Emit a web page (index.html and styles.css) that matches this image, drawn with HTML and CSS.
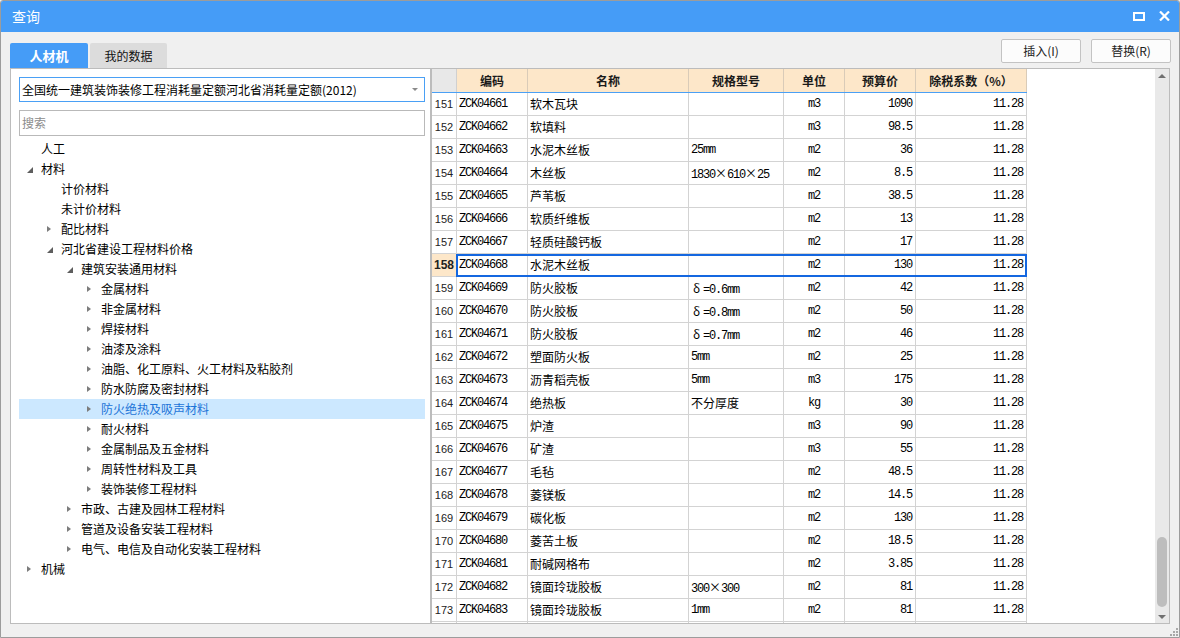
FILE: index.html
```html
<!DOCTYPE html>
<html lang="zh-CN">
<head>
<meta charset="utf-8">
<title>查询</title>
<link rel="stylesheet" href="styles.css">
</head>
<body>
<div class="window">
  <div class="titlebar">
    <span class="title">查询</span>
    <div class="win-btns">
      <svg class="ico-max" width="12" height="9" viewBox="0 0 12 9"><rect x="1" y="1" width="10" height="7" fill="none" stroke="#fff" stroke-width="2"/></svg>
      <svg class="ico-close" width="11" height="10" viewBox="0 0 11 10"><path d="M1 0.5 L10 9.5 M10 0.5 L1 9.5" stroke="#fff" stroke-width="2.2" fill="none"/></svg>
    </div>
  </div>
  <div class="toolbar">
    <div class="tabs">
      <div class="tab active">人材机</div>
      <div class="tab">我的数据</div>
    </div>
    <div class="actions">
      <div class="btn">插入(I)</div>
      <div class="btn">替换(R)</div>
    </div>
  </div>
  <div class="main">
    <div class="left">
      <div class="select"><span class="select-text">全国统一建筑装饰装修工程消耗量定额河北省消耗量定额(2012)</span><span class="caret"></span></div>
      <div class="search"><span class="placeholder">搜索</span></div>
      <div class="tree">
        <div class="node l0"><span class="tog"></span><span>人工</span></div>
        <div class="node l0"><span class="tog"><i class="arr-e"></i></span><span>材料</span></div>
        <div class="node l1"><span class="tog"></span><span>计价材料</span></div>
        <div class="node l1"><span class="tog"></span><span>未计价材料</span></div>
        <div class="node l1"><span class="tog"><i class="arr-c"></i></span><span>配比材料</span></div>
        <div class="node l1"><span class="tog"><i class="arr-e"></i></span><span>河北省建设工程材料价格</span></div>
        <div class="node l2"><span class="tog"><i class="arr-e"></i></span><span>建筑安装通用材料</span></div>
        <div class="node l3"><span class="tog"><i class="arr-c"></i></span><span>金属材料</span></div>
        <div class="node l3"><span class="tog"><i class="arr-c"></i></span><span>非金属材料</span></div>
        <div class="node l3"><span class="tog"><i class="arr-c"></i></span><span>焊接材料</span></div>
        <div class="node l3"><span class="tog"><i class="arr-c"></i></span><span>油漆及涂料</span></div>
        <div class="node l3"><span class="tog"><i class="arr-c"></i></span><span>油脂、化工原料、火工材料及粘胶剂</span></div>
        <div class="node l3"><span class="tog"><i class="arr-c"></i></span><span>防水防腐及密封材料</span></div>
        <div class="node l3 sel"><span class="tog"><i class="arr-c"></i></span><span>防火绝热及吸声材料</span></div>
        <div class="node l3"><span class="tog"><i class="arr-c"></i></span><span>耐火材料</span></div>
        <div class="node l3"><span class="tog"><i class="arr-c"></i></span><span>金属制品及五金材料</span></div>
        <div class="node l3"><span class="tog"><i class="arr-c"></i></span><span>周转性材料及工具</span></div>
        <div class="node l3"><span class="tog"><i class="arr-c"></i></span><span>装饰装修工程材料</span></div>
        <div class="node l2"><span class="tog"><i class="arr-c"></i></span><span>市政、古建及园林工程材料</span></div>
        <div class="node l2"><span class="tog"><i class="arr-c"></i></span><span>管道及设备安装工程材料</span></div>
        <div class="node l2"><span class="tog"><i class="arr-c"></i></span><span>电气、电信及自动化安装工程材料</span></div>
        <div class="node l0"><span class="tog"><i class="arr-c"></i></span><span>机械</span></div>
      </div>
    </div>
    <div class="right">
      <div class="grid-wrap">
        <div class="row head">
          <div class="c rn"></div><div class="c">编码</div><div class="c">名称</div><div class="c">规格型号</div><div class="c">单位</div><div class="c">预算价</div><div class="c">除税系数（%）</div>
        </div>
        <div class="row"><div class="c rn">151</div><div class="c code">ZCK04661</div><div class="c name">软木瓦块</div><div class="c spec"></div><div class="c unit">m3</div><div class="c num">1090</div><div class="c num">11.28</div></div>
        <div class="row"><div class="c rn">152</div><div class="c code">ZCK04662</div><div class="c name">软填料</div><div class="c spec"></div><div class="c unit">m3</div><div class="c num">98.5</div><div class="c num">11.28</div></div>
        <div class="row"><div class="c rn">153</div><div class="c code">ZCK04663</div><div class="c name">水泥木丝板</div><div class="c spec">25mm</div><div class="c unit">m2</div><div class="c num">36</div><div class="c num">11.28</div></div>
        <div class="row"><div class="c rn">154</div><div class="c code">ZCK04664</div><div class="c name">木丝板</div><div class="c spec">1830<span class="fw">×</span>610<span class="fw">×</span>25</div><div class="c unit">m2</div><div class="c num">8.5</div><div class="c num">11.28</div></div>
        <div class="row"><div class="c rn">155</div><div class="c code">ZCK04665</div><div class="c name">芦苇板</div><div class="c spec"></div><div class="c unit">m2</div><div class="c num">38.5</div><div class="c num">11.28</div></div>
        <div class="row"><div class="c rn">156</div><div class="c code">ZCK04666</div><div class="c name">软质纤维板</div><div class="c spec"></div><div class="c unit">m2</div><div class="c num">13</div><div class="c num">11.28</div></div>
        <div class="row"><div class="c rn">157</div><div class="c code">ZCK04667</div><div class="c name">轻质硅酸钙板</div><div class="c spec"></div><div class="c unit">m2</div><div class="c num">17</div><div class="c num">11.28</div></div>
        <div class="row selected"><div class="c rn">158</div><div class="c code">ZCK04668</div><div class="c name">水泥木丝板</div><div class="c spec"></div><div class="c unit">m2</div><div class="c num">130</div><div class="c num">11.28</div></div>
        <div class="row"><div class="c rn">159</div><div class="c code">ZCK04669</div><div class="c name">防火胶板</div><div class="c spec"><span class="fw fwl">δ</span>=0.6mm</div><div class="c unit">m2</div><div class="c num">42</div><div class="c num">11.28</div></div>
        <div class="row"><div class="c rn">160</div><div class="c code">ZCK04670</div><div class="c name">防火胶板</div><div class="c spec"><span class="fw fwl">δ</span>=0.8mm</div><div class="c unit">m2</div><div class="c num">50</div><div class="c num">11.28</div></div>
        <div class="row"><div class="c rn">161</div><div class="c code">ZCK04671</div><div class="c name">防火胶板</div><div class="c spec"><span class="fw fwl">δ</span>=0.7mm</div><div class="c unit">m2</div><div class="c num">46</div><div class="c num">11.28</div></div>
        <div class="row"><div class="c rn">162</div><div class="c code">ZCK04672</div><div class="c name">塑面防火板</div><div class="c spec">5mm</div><div class="c unit">m2</div><div class="c num">25</div><div class="c num">11.28</div></div>
        <div class="row"><div class="c rn">163</div><div class="c code">ZCK04673</div><div class="c name">沥青稻壳板</div><div class="c spec">5mm</div><div class="c unit">m3</div><div class="c num">175</div><div class="c num">11.28</div></div>
        <div class="row"><div class="c rn">164</div><div class="c code">ZCK04674</div><div class="c name">绝热板</div><div class="c spec"><span class="cjk">不分厚度</span></div><div class="c unit">kg</div><div class="c num">30</div><div class="c num">11.28</div></div>
        <div class="row"><div class="c rn">165</div><div class="c code">ZCK04675</div><div class="c name">炉渣</div><div class="c spec"></div><div class="c unit">m3</div><div class="c num">90</div><div class="c num">11.28</div></div>
        <div class="row"><div class="c rn">166</div><div class="c code">ZCK04676</div><div class="c name">矿渣</div><div class="c spec"></div><div class="c unit">m3</div><div class="c num">55</div><div class="c num">11.28</div></div>
        <div class="row"><div class="c rn">167</div><div class="c code">ZCK04677</div><div class="c name">毛毡</div><div class="c spec"></div><div class="c unit">m2</div><div class="c num">48.5</div><div class="c num">11.28</div></div>
        <div class="row"><div class="c rn">168</div><div class="c code">ZCK04678</div><div class="c name">菱镁板</div><div class="c spec"></div><div class="c unit">m2</div><div class="c num">14.5</div><div class="c num">11.28</div></div>
        <div class="row"><div class="c rn">169</div><div class="c code">ZCK04679</div><div class="c name">碳化板</div><div class="c spec"></div><div class="c unit">m2</div><div class="c num">130</div><div class="c num">11.28</div></div>
        <div class="row"><div class="c rn">170</div><div class="c code">ZCK04680</div><div class="c name">菱苦土板</div><div class="c spec"></div><div class="c unit">m2</div><div class="c num">18.5</div><div class="c num">11.28</div></div>
        <div class="row"><div class="c rn">171</div><div class="c code">ZCK04681</div><div class="c name">耐碱网格布</div><div class="c spec"></div><div class="c unit">m2</div><div class="c num">3.85</div><div class="c num">11.28</div></div>
        <div class="row"><div class="c rn">172</div><div class="c code">ZCK04682</div><div class="c name">镜面玲珑胶板</div><div class="c spec">300<span class="fw">×</span>300</div><div class="c unit">m2</div><div class="c num">81</div><div class="c num">11.28</div></div>
        <div class="row"><div class="c rn">173</div><div class="c code">ZCK04683</div><div class="c name">镜面玲珑胶板</div><div class="c spec">1mm</div><div class="c unit">m2</div><div class="c num">81</div><div class="c num">11.28</div></div>
        <div class="row"><div class="c rn"></div><div class="c code"></div><div class="c name"></div><div class="c spec"></div><div class="c unit"></div><div class="c num"></div><div class="c num"></div></div>
      </div>
      <div class="vscroll">
        <span class="sb-up"></span>
        <span class="sb-space"></span>
        <span class="sb-thumb"></span>
        <span class="sb-down"></span>
      </div>
    </div>
  </div>
  <div class="footer">
    <svg class="grip" width="8" height="8" viewBox="0 0 8 8">
      <rect x="6" y="0" width="2" height="2" fill="#a8a8a8"/>
      <rect x="3" y="3" width="2" height="2" fill="#a8a8a8"/>
      <rect x="6" y="3" width="2" height="2" fill="#a8a8a8"/>
      <rect x="0" y="6" width="2" height="2" fill="#a8a8a8"/>
      <rect x="3" y="6" width="2" height="2" fill="#a8a8a8"/>
      <rect x="6" y="6" width="2" height="2" fill="#a8a8a8"/>
    </svg>
  </div>
</div>
</body>
</html>
```
FILE: styles.css
```css
* { box-sizing: border-box; }
html, body { margin: 0; padding: 0; }
body {
  width: 1180px;
  height: 638px;
  overflow: hidden;
  font-family: "Noto Sans CJK SC", "Liberation Sans", sans-serif;
  font-size: 12px;
  color: #000;
  background: #f0f0f0;
}
.window {
  width: 1180px;
  height: 638px;
  border: 1px solid #9c9c9c;
  border-radius: 3px 3px 0 0;
  background: #f0f0f0;
  display: flex;
  flex-direction: column;
  overflow: hidden;
}
.titlebar {
  height: 31px;
  flex: none;
  background: #459cf7;
  display: flex;
  align-items: center;
  justify-content: space-between;
  padding: 0 9px 0 11px;
}
.title {
  color: #fff;
  font-size: 14px;
  line-height: 20px;
  margin-top: -2px;
}
.win-btns {
  display: flex;
  align-items: center;
  gap: 14px;
  margin-top: -1px;
}
.ico-max, .ico-close { display: block; }
.toolbar {
  height: 36px;
  flex: none;
  display: flex;
  justify-content: space-between;
  padding: 0 8px 0 9px;
}
.tabs {
  display: flex;
  align-items: flex-end;
  gap: 2px;
}
.tab {
  height: 25px;
  line-height: 25px;
  width: 78px;
  text-align: center;
  background: #dcdcdc;
  border-radius: 2px 2px 0 0;
  font-size: 12px;
  color: #111;
}
.tab + .tab { width: 77px; }
.tab.active {
  background: #459cf7;
  color: #fff;
  font-weight: bold;
  font-size: 13px;
}
.actions {
  display: flex;
  gap: 10px;
  padding-top: 7px;
}
.btn {
  width: 80px;
  height: 24px;
  line-height: 22px;
  text-align: center;
  border: 1px solid #c3c3c3;
  border-radius: 2px;
  background: #fcfcfc;
  color: #222;
  font-size: 12px;
}
.main {
  height: 556px;
  flex: none;
  display: flex;
  padding: 0 9px;
}
.left {
  width: 421px;
  height: 556px;
  background: #fff;
  border: 1px solid #bcbcbc;
  padding: 8px 5px 0 8px;
  display: flex;
  flex-direction: column;
}
.select {
  height: 25px;
  border: 1px solid #4aa0f5;
  background: #fff;
  display: flex;
  align-items: center;
  justify-content: space-between;
  padding: 0 6px 0 2px;
}
.select-text {
  line-height: 23px;
  color: #000;
}
.caret {
  width: 0;
  height: 0;
  border-left: 3px solid transparent;
  border-right: 3px solid transparent;
  border-top: 3px solid #8a8a8a;
}
.search {
  height: 26px;
  margin-top: 8px;
  border: 1px solid #b9b9b9;
  background: #fff;
  padding: 0 2px;
  display: flex;
  align-items: center;
}
.placeholder {
  color: #8c8c8c;
  line-height: 24px;
}
.tree {
  margin-top: 3px;
}
.node {
  height: 20px;
  line-height: 20px;
  display: flex;
  align-items: center;
  white-space: nowrap;
}
.node.l0 { padding-left: 8px; }
.node.l1 { padding-left: 28px; }
.node.l2 { padding-left: 48px; }
.node.l3 { padding-left: 68px; }
.node.sel {
  background: #cce8ff;
  color: #1c74d8;
}
.tog {
  width: 14px;
  height: 20px;
  flex: none;
  display: flex;
  align-items: center;
}
.arr-c {
  display: block;
  width: 0;
  height: 0;
  border-left: 4px solid #7c7c7c;
  border-top: 3.5px solid transparent;
  border-bottom: 3.5px solid transparent;
}
.arr-e {
  display: block;
  width: 0;
  height: 0;
  border-left: 6px solid transparent;
  border-bottom: 6px solid #5e5e5e;
  margin-top: 2px;
}
.right {
  width: 739px;
  height: 556px;
  background: #fff;
  border: 1px solid #bcbcbc;
  display: flex;
}
.grid-wrap {
  flex: 1;
  overflow: hidden;
}
.row {
  display: grid;
  grid-template-columns: 25px 71px 161px 95px 61px 71px 111px;
  width: 595px;
  height: 23px;
  position: relative;
}
.c {
  border-right: 1px solid #d3d3d3;
  border-bottom: 1px solid #d3d3d3;
  line-height: 22px;
  white-space: nowrap;
  overflow: hidden;
}
.row.head {
  height: 24px;
  background: #fde7c9;
  border-bottom: 1px solid #4aa0f5;
}
.row.head .c {
  border-bottom: none;
  border-right-color: #d9cbb8;
  text-align: center;
  font-weight: bold;
  line-height: 23px;
  color: #1a1a1a;
}
.row.head .c.rn { background: #e8e8e8; border-right-color: #d0d0d0; }
.c.rn {
  font-family: "Liberation Sans", sans-serif;
  font-size: 11px;
  text-align: center;
  color: #222;
}
.code, .unit, .num, .spec {
  font-family: "Liberation Mono", monospace;
  font-size: 12px;
  letter-spacing: -1.2px;
}
.code { padding-left: 2px; }
.name { padding-left: 2px; }
.spec { padding-left: 2px; }
.unit { text-align: center; }
.num { text-align: right; padding-right: 3px; }
.fw {
  display: inline-block;
  width: 12px;
  text-align: center;
  font-family: "Noto Sans CJK SC", sans-serif;
  font-size: 12px;
  letter-spacing: 0;
}
.fwl { text-align: left; padding-left: 2px; }
.cjk {
  font-family: "Noto Sans CJK SC", sans-serif;
  font-size: 12px;
  letter-spacing: 0;
}
.row.selected .rn {
  background: #fde7c9;
  font-weight: bold;
  font-size: 12px;
}
.row.selected::after {
  content: "";
  position: absolute;
  left: 24px;
  top: 0;
  right: 0;
  bottom: 0;
  border: 2px solid #1467e0;
  pointer-events: none;
}
.vscroll {
  width: 14px;
  flex: none;
  background: #e9e9e9;
  display: flex;
  flex-direction: column;
  align-items: center;
  padding: 5px 0 4px;
}
.sb-up {
  width: 0;
  height: 0;
  border-left: 4.5px solid transparent;
  border-right: 4.5px solid transparent;
  border-bottom: 4px solid #707070;
}
.sb-space { flex: 1; }
.sb-thumb {
  width: 10px;
  height: 70px;
  border-radius: 5px;
  background: #bdbdbd;
  margin-bottom: 8px;
}
.sb-down {
  width: 0;
  height: 0;
  border-left: 4.5px solid transparent;
  border-right: 4.5px solid transparent;
  border-top: 4px solid #707070;
}
.footer {
  flex: 1;
  display: flex;
  justify-content: flex-end;
  align-items: flex-end;
  padding: 0 1px 1px 0;
}
.grip { display: block; }
```
